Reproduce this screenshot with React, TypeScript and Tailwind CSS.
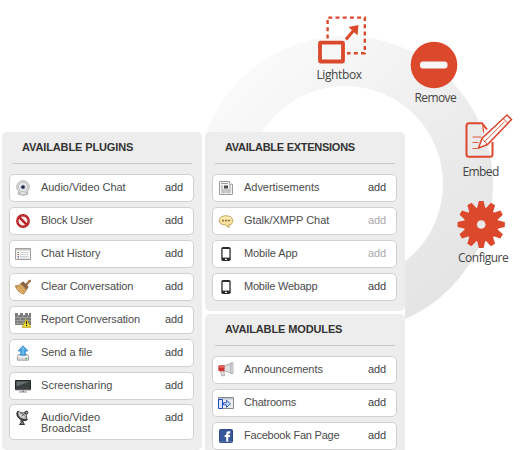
import React from "react";

type Kind =
  | "webcam" | "block" | "history" | "broom" | "wall" | "upload" | "monitor" | "dish"
  | "news" | "chat" | "phone" | "horn" | "rooms" | "facebook";

function Icon({ kind }: { kind: Kind }) {
  switch (kind) {
    case "webcam":
      return (
        <>
          <path d="M3 14 4.6 10h6.8L13 14q-5 2.6-10 0z" fill="#d8d8d8" stroke="#999" strokeWidth=".8" />
          <circle cx="8" cy="7" r="6.3" fill="#e2e2e2" stroke="#a6a6a6" strokeWidth=".8" />
          <circle cx="8" cy="7" r="4.4" fill="#fafafa" stroke="#aaa" strokeWidth=".8" />
          <circle cx="8" cy="7" r="2.5" fill="#8e97ad" />
          <circle cx="8" cy="7.2" r="1.4" fill="#1b2336" />
          <path d="M5.5 13.2h5" stroke="#fff" strokeWidth=".8" />
        </>
      );
    case "block":
      return (
        <>
          <circle cx="8" cy="8" r="5.7" fill="#f6eaea" stroke="#b01e1e" strokeWidth="2.4" />
          <path d="m4.2 4.2 7.6 7.6" stroke="#b92222" strokeWidth="2.4" />
          <circle cx="8" cy="8" r="5.9" fill="none" stroke="#d34343" strokeWidth=".7" />
        </>
      );
    case "history":
      return (
        <>
          <path d="M.5 2.5h15v11H.5z" fill="#f8f8f8" stroke="#a0a0a0" />
          <path d="M1 3h14v1.5H1z" fill="#c6c6c6" />
          <path d="M5 6.5h8.5M5 8.5h8.5M5 10.5h8.5M5 12h8.5" stroke="#c3c7cc" strokeWidth=".7" />
          <path d="M2.5 6.5H4" stroke="#494" /><path d="M2.5 8.5H4" stroke="#d33" /><path d="M2.5 10.5H4" stroke="#46b" /><path d="M2.5 12.2H4" stroke="#d33" strokeWidth=".7" />
        </>
      );
    case "broom":
      return (
        <>
          <path d="m10.4 5.4 3.9-4.3q1.7-.5 1.3 1.2l-3.9 4.2z" fill="#b5713c" stroke="#8a5a30" strokeWidth=".6" />
          <path d="M6.4 4.2Q4.2 7 .3 6.7 1.5 12.4 8.5 15.2q1.7-2 3.4-5.1z" fill="#cd9650" stroke="#94632f" strokeWidth=".6" />
          <path d="m2.8 7.3 5.9 6.4M5 6.5l5 5.6M2 9l5 5" stroke="#f1cf8b" strokeWidth=".8" />
          <path d="m6.2 4.3 2-1.5 5 5-1.4 2.3z" fill="#8a6448" stroke="#65452e" strokeWidth=".6" />
        </>
      );
    case "wall":
      return (
        <>
          <path d="M0 1h3v2h2V1h3v2h2V1h3v2h1V1h2v12H0z" fill="#7c7c7c" />
          <path d="M0 5.5h16M0 8.5h16M0 11.5h11M3 3v3m5-3v3m5-3v3M5.5 6v3m5-3v3M3 9v3m5-3v3" stroke="#b4b4b4" strokeWidth=".6" />
          <path d="m11.5 7 4.3 8.3H7.1z" fill="#f4df35" stroke="#b39a10" strokeWidth=".8" />
          <path d="M11.5 9.3v3m0 .8v1.1" stroke="#292817" strokeWidth="1.1" />
        </>
      );
    case "upload":
      return (
        <>
          <path d="m2.4 11.5 1.3-2h8.6l1.3 2v3.7H2.4z" fill="#d7d7d7" stroke="#8b918c" strokeWidth=".8" />
          <path d="M3 11.8h10" stroke="#fff" /><path d="M10.5 13.6H12" stroke="#4aa44a" />
          <path d="M8 .7 13 6h-2.7v4.3H5.7V6H3z" fill="#4aa6e2" stroke="#2b7dbd" strokeWidth=".7" />
          <path d="M8 2v7.5" stroke="#86cbf4" />
        </>
      );
    case "monitor":
      return (
        <>
          <path d="M.5 2.5h15v9H.5z" fill="#3a3f40" stroke="#222424" />
          <path d="M1.5 3.5h13l-13 5z" fill="#667071" />
          <path d="M.5 12h15" stroke="#8d8d8d" /><path d="M7 12.5h2v1h3v1H4v-1h3z" fill="#888" />
        </>
      );
    case "dish":
      return (
        <>
          <path d="M6 10v2.5l-1.5 2h5L8 12v-1.5" fill="#777" stroke="#292929" strokeWidth=".9" />
          <path d="M3 1Q1 3 2.3 6q2.2 4.6 8.6 4.6l1.7-1.2z" fill="#4c4c4c" stroke="#252525" />
          <path d="M3.2 1.3q5.5 1.5 8.8 8Q5 9 3.6 5.7 2.8 3.6 3.2 1.3z" fill="#d2d2d2" stroke="#444" strokeWidth=".6" />
          <path d="m6.7 6 4-3.2M5.2 3l5.5-.2 1 5" stroke="#333" strokeWidth=".9" fill="none" />
          <circle cx="11.4" cy="2.6" r="1.5" fill="#999" stroke="#292929" />
        </>
      );
    case "news":
      return (
        <>
          <path d="M1.5 1.5h10l3 3v10h-13z" fill="#f4f4f4" stroke="#9a9a9a" />
          <path d="M3 3.5h7M3 6h2M3 8h2M11 6h2M11 8h2M3 10h10M3 12h10" stroke="#8a8a8a" strokeWidth=".8" />
          <path d="M6 5.5h4v3H6z" fill="#4c4c4c" /><path d="M5.3 9v5m5-5v5" stroke="#bbb" strokeWidth=".7" />
          <path d="M11.5 1.5v3h3" fill="#fff" stroke="#999" strokeWidth=".7" />
        </>
      );
    case "chat":
      return (
        <>
          <path d="M8 2.8c8.6 0 8.6 9 2.6 9.2l.6 2.6L7.6 12C-1 12-.9 2.8 8 2.8z" fill="#f8e19a" stroke="#b99a52" strokeWidth=".9" />
          <path d="M3.2 5.6q4.8-2.6 9.6 0" stroke="#fff3c6" strokeWidth="1.2" fill="none" />
          <circle cx="5" cy="7.6" r=".95" fill="#6f5c34" /><circle cx="8" cy="7.6" r=".95" fill="#6f5c34" /><circle cx="11" cy="7.6" r=".95" fill="#6f5c34" />
        </>
      );
    case "phone":
      return (
        <>
          <rect x="3.3" y="1" width="9.4" height="14" rx="1.7" fill="#2b2b2b" />
          <path d="M4.6 3h6.8v8.6H4.6z" fill="#fff" /><path d="M7 13.3h2" stroke="#eee" strokeWidth="1.2" />
        </>
      );
    case "horn":
      return (
        <>
          <path d="M2.5 8.5h3.2l.8 5.2H3.8z" fill="#e4e4e4" stroke="#999" strokeWidth=".8" />
          <path d="m6 4 7-2.7v9.6L6 9z" fill="#dedede" stroke="#a6a6a6" strokeWidth=".8" />
          <path d="M13 .9h2v10.6h-2z" fill="#f5f5f5" stroke="#999" strokeWidth=".8" />
          <path d="M.3 4.5Q.3 3.3 2 3.3h4.5v6H2Q.3 9.3.3 8z" fill="#cf3232" />
          <path d="M1 5h5.5" stroke="#f28a80" />
        </>
      );
    case "rooms":
      return (
        <>
          <path d="M.5 2.5h15v11H.5z" fill="#ececec" stroke="#8c8c8c" />
          <path d="M1 3h14v1.4H1z" fill="#bcc4d4" />
          <path d="M.5 4.5h4v9h-4z" fill="#d7e5ff" stroke="#244cc2" />
          <path d="M5.5 7.7h3V5.2l4 3.6-4 3.6V9.9h-3z" fill="#c8dcff" stroke="#2650bc" strokeWidth=".9" />
        </>
      );
    case "facebook":
      return (
        <>
          <rect x="1.5" y="1.5" width="13" height="13" rx="1" fill="#37589b" stroke="#2c4a86" />
          <path d="M8.2 14V9H6.7V6.9h1.5V5.7Q8.2 3.3 10.7 3.3h1.5v2.1h-1q-.9 0-.9.8v.7h1.9L11.9 9h-1.6v5z" fill="#fff" />
          <path d="M2 13.7h12" stroke="#7187b5" strokeWidth=".7" />
        </>
      );
  }
}

type Item = { name: string; icon: Kind; off?: boolean; tall?: boolean; track: string };

const plugins: Item[] = [
  { name: "Audio/Video Chat", icon: "webcam", track: "tracking-[-0.05px]" },
  { name: "Block User", icon: "block", track: "tracking-[-0.1px]" },
  { name: "Chat History", icon: "history", track: "tracking-[-0.1px]" },
  { name: "Clear Conversation", icon: "broom", track: "tracking-[-0.1px]" },
  { name: "Report Conversation", icon: "wall", track: "tracking-[-0.1px]" },
  { name: "Send a file", icon: "upload", track: "tracking-[-0.07px]" },
  { name: "Screensharing", icon: "monitor", track: "tracking-[0.04px]" },
  { name: "Audio/Video Broadcast", icon: "dish", tall: true, track: "tracking-[0px]" },
];
const extensions: Item[] = [
  { name: "Advertisements", icon: "news", track: "tracking-[-0.03px]" },
  { name: "Gtalk/XMPP Chat", icon: "chat", off: true, track: "tracking-[-0.05px]" },
  { name: "Mobile App", icon: "phone", off: true, track: "tracking-[-0.1px]" },
  { name: "Mobile Webapp", icon: "phone", track: "tracking-[-0.22px]" },
];
const modules: Item[] = [
  { name: "Announcements", icon: "horn", track: "tracking-[-0.05px]" },
  { name: "Chatrooms", icon: "rooms", track: "tracking-[-0.2px]" },
  { name: "Facebook Fan Page", icon: "facebook", track: "tracking-[-0.22px]" },
];

function Row({ item }: { item: Item }) {
  return (
    <li className={`flex w-[185px] items-start rounded-[5px] border border-[#d1d1d1] bg-white pl-[5px] pr-2.5 ${item.tall ? "-mt-px h-9" : "h-7"}`}>
      <svg viewBox="0 0 16 16" className="mt-[5px] h-4 w-4 shrink-0"><Icon kind={item.icon} /></svg>
      <span className={`ml-2.5 mt-[7px] text-[11px] leading-[11px] text-[#4b4b4b] ${item.tall ? "w-20" : "w-[110px]"} ${item.track}`}>{item.name}</span>
      <span className={`ml-auto mt-[7px] text-[11px] leading-[11px] tracking-[-0.1px] ${item.off ? "text-[#aaa]" : "text-[#444]"}`}>add</span>
    </li>
  );
}

function Panel({ title, items, height, track }: { title: string; items: Item[]; height: string; track: string }) {
  return (
    <section className={`w-[200px] rounded-[5px] bg-[#ededed] ${height}`}>
      <h2 className={`ml-2.5 flex h-8 w-[180px] items-center whitespace-nowrap border-b border-[#c9c9c9] pl-2.5 text-[11px] font-bold text-[#333] ${track}`}>{title}</h2>
      <ul className="ml-[7px] mt-2.5 flex flex-col gap-[5px]">
        {items.map((item) => <Row key={item.name} item={item} />)}
      </ul>
    </section>
  );
}

function Label({ text, place }: { text: string; place: string }) {
  return <span className={`absolute whitespace-nowrap font-['Open_Sans',sans-serif] text-[12px] leading-4 text-[#444] ${place}`}>{text}</span>;
}

export default function App() {
  const teeth = Array.from({ length: 12 }, (_, i) => i * 30);
  return (
    <main className="relative h-[450px] w-[530px] overflow-hidden bg-white font-['Liberation_Sans',Arial,sans-serif]">
      <svg viewBox="0 0 530 450" className="absolute inset-0 h-full w-full">
        <defs>
          <linearGradient id="ring" gradientUnits="userSpaceOnUse" x1="215" y1="80" x2="430" y2="310">
            <stop stopColor="#fbfbfb" /><stop offset=".35" stopColor="#f3f3f3" /><stop offset=".65" stopColor="#ebebeb" /><stop offset="1" stopColor="#e4e4e4" />
          </linearGradient>
        </defs>
        <path fillRule="evenodd" fill="url(#ring)" d="M197 184a148 148 0 1 0 296 0a148 148 0 1 0-296 0M247 184a98 98 0 1 0 196 0a98 98 0 1 0-196 0" />
        <g fill="none" stroke="#dc482c">
          <path d="M327.6 38.5V17.6H364.8V53.3H347" strokeWidth="2.4" strokeDasharray="4 3.2" />
          <rect x="320" y="42.7" width="23" height="18.8" rx=".5" strokeWidth="3.8" />
          <path d="m346 39.5 8-9.5" strokeWidth="3" />
          <path d="m348.5 27 10-2-1 10.5z" fill="#dc482c" stroke="none" />
        </g>
        <circle cx="434" cy="65" r="23.3" fill="#dc482c" />
        <rect x="420" y="61.5" width="27.5" height="7" rx="3" fill="#f7f7f7" />
        <g fill="none" stroke="#dc482c" strokeWidth="2">
          <path d="M487 129.5l-5-6.3h-13q-2.5 0-2.5 2.5v29q0 2 2.5 2h21q2.5 0 2.5-2V142" />
          <path d="m482.5 123.5 1.2 9" strokeWidth="1.2" />
          <path d="m478.5 148 3.5-9.5 25-23.5 4.5 4.5-24 25z" fill="#fff" strokeWidth="1.5" />
          <path d="m482 138.5 5.5 6m-2.8-3 20-20m-1.5-3 4.8 4.8M472.5 137h9m-9 5.5h6m-6 6h5" strokeWidth=".9" />
        </g>
        <g fill="#dc482c" transform="translate(481.2 224.5)">
          {teeth.map((a) => <path key={a} d="m-4.4-15 2-8.6h4.8l2 8.6z" transform={`rotate(${a})`} />)}
          <circle r="17.3" /><circle r="4.3" fill="#e9e9e9" />
        </g>
      </svg>
      <Label text="Lightbox" place="left-[316.5px] top-[66.5px] tracking-[-0.4px]" />
      <Label text="Remove" place="left-[414.5px] top-[89.5px] tracking-[-0.6px]" />
      <Label text="Embed" place="left-[462.5px] top-[163.5px] tracking-[-0.6px]" />
      <Label text="Configure" place="left-[458px] top-[249.5px] tracking-[-0.5px]" />
      <div className="relative flex items-start pl-0.5 pt-[132px]">
        <div className="bg-white pr-[3px]">
          <Panel title="AVAILABLE PLUGINS" items={plugins} height="h-[318px]" track="tracking-[-0.12px]" />
        </div>
        <div className="flex flex-col gap-[3px] rounded-[5px] bg-white">
          <Panel title="AVAILABLE EXTENSIONS" items={extensions} height="h-[179px]" track="tracking-[-0.27px]" />
          <Panel title="AVAILABLE MODULES" items={modules} height="h-[150px]" track="tracking-[-0.12px]" />
        </div>
      </div>
    </main>
  );
}
